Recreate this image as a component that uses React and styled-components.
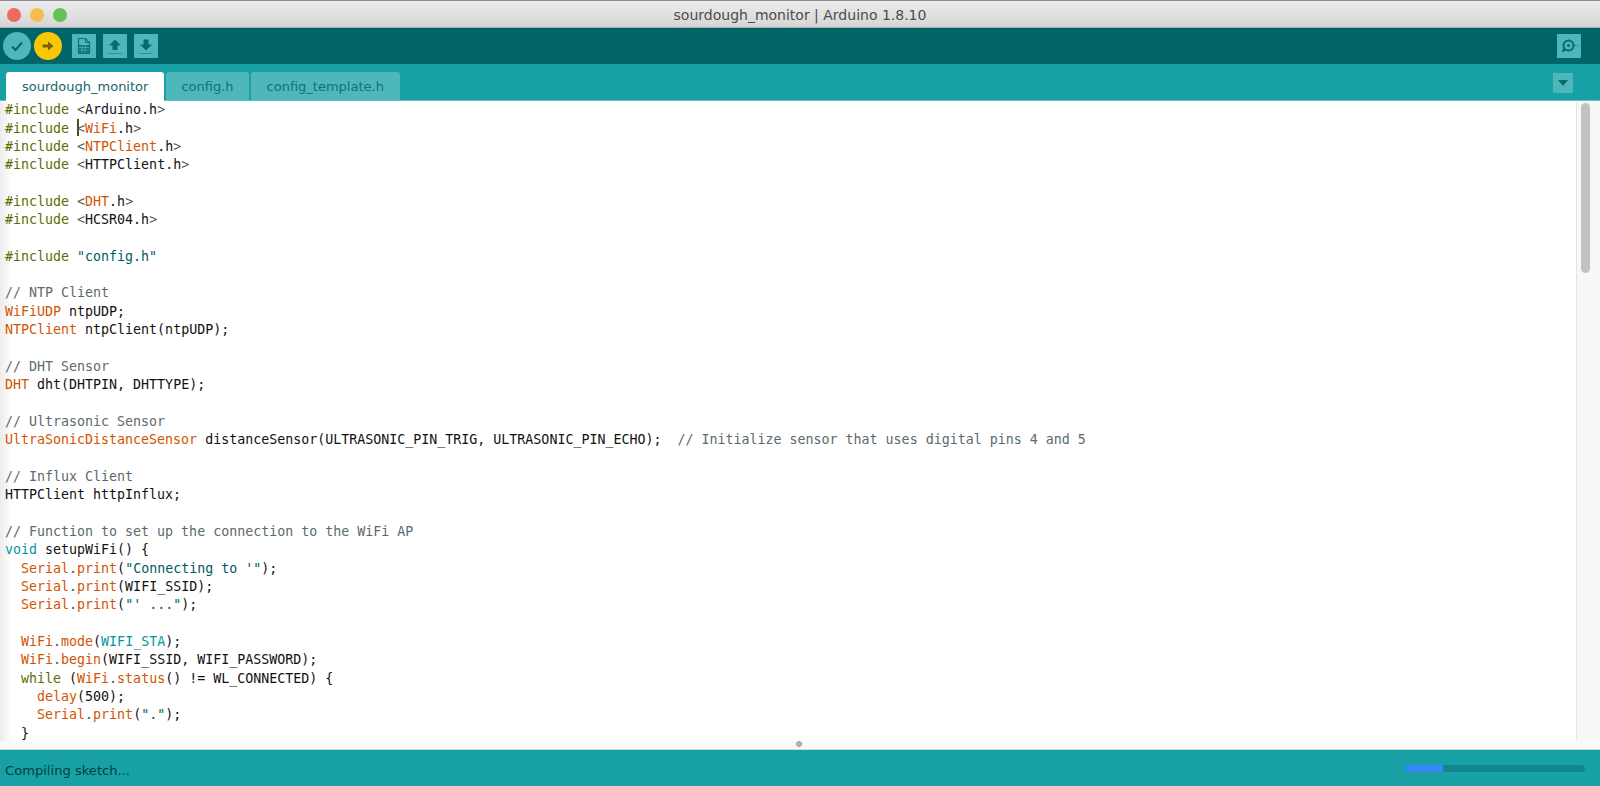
import React from "react";
import styled, { createGlobalStyle } from "styled-components";

const Global = createGlobalStyle`
  html, body { margin: 0; padding: 0; height: 100%; background: #fff; overflow: hidden; }
  #root { height: 100%; }
`;

const Frame = styled.div`
  display: flex; flex-direction: column; height: 786px; width: 1600px; overflow: hidden;
`;
const TitleBar = styled.header`
  position: relative; flex: 0 0 28px; box-sizing: border-box; display: flex; align-items: center; justify-content: center;
  background: linear-gradient(#ececec, #d6d6d6); padding-top: 2px;
  border-top: 1px solid #8a8a90; border-bottom: 1px solid #a9a9a9;
  font: 14px "DejaVu Sans", sans-serif; color: #4c4c4c;
`;
const Lights = styled.div`
  position: absolute; left: 7px; top: 7px; display: flex; gap: 9px;
`;
const Light = styled.span`
  width: 14px; height: 14px; border-radius: 50%; background: ${p => p.$c};
`;
const Toolbar = styled.div`
  flex: 0 0 36px; display: flex; align-items: center; background: #006468; padding: 0 19px 0 3px;
`;
const Round = styled.button`
  width: 28px; height: 28px; padding: 0; border: 0; border-radius: 50%; margin-right: 3px;
  background: ${p => p.$bg}; display: flex; align-items: center; justify-content: center;
`;
const Square = styled.button`
  width: 24px; height: 24px; padding: 0; border: 0; margin-right: ${p => (p.$last ? 0 : 7)}px; background: #4db7bb;
  display: flex; align-items: center; justify-content: center;
`;
const Gap = styled.div`width: ${p => p.$w}px; flex: 0 0 auto;`;
const Spacer = styled.div`flex: 1;`;
const TabBar = styled.div`
  flex: 0 0 37px; box-sizing: border-box; display: flex; align-items: flex-end; gap: 2px;
  background: #17a1a5; padding: 0 27px 0 6px; border-bottom: 1px solid #5cc3c6;
`;
const Tab = styled.div`
  box-sizing: border-box; padding: 0 ${p => p.$pad}px; border-radius: 3px 3px 0 0; display: flex; align-items: center;
  background: ${p => (p.$active ? "#fff" : "#4db7bb")}; color: ${p => (p.$active ? "#17666a" : "#0f7478")};
  font: 13px "DejaVu Sans", sans-serif; margin-bottom: ${p => (p.$active ? "-1px" : "0")};
  height: ${p => (p.$active ? "29px" : "28px")};
`;
const Dropdown = styled.div`
  width: 20px; height: 20px; background: #4db7bb; align-self: flex-start; margin-top: 9px;
  display: flex; align-items: center; justify-content: center;
`;
const EditorRow = styled.div`flex: 1; min-height: 0; display: flex; background: #fff;`;
const Code = styled.pre`
  flex: 1; margin: 0; padding: 0 0 0 5px; overflow: hidden;
  font: 13.3px/18.35px "DejaVu Sans Mono", monospace; color: #111;
  background: linear-gradient(90deg, #ececec 0, #fff 12px);
`;
const Line = styled.div`height: 18.35px; white-space: pre;`;
const COLORS = { k: "#5e6d03", o: "#d35400", s: "#005c5f", c: "#5c6a6e", t: "#00979c", g: "#555" };
const Tok = styled.span`color: ${p => COLORS[p.$k] || "#111"};`;
const Caret = styled.span`
  display: inline-block; width: 2px; height: 17px; background: #4d4d22; margin: 0 -2px -3px 0;
`;
const ScrollTrack = styled.div`
  flex: 0 0 16px; background: #f7f7f7; border-left: 1px solid #e4e4e4; padding: 2px 3px 0 4px;
`;
const Thumb = styled.div`width: 9px; height: 170px; border-radius: 5px; background: #c2c2c2;`;
const Splitter = styled.div`
  flex: 0 0 9px; background: #fafafa; position: relative;
  border-bottom: 1px solid #c8dcdc; box-sizing: border-box;
`;
const Knob = styled.span`
  width: 6px; height: 6px; border-radius: 50%; background: #b6b6b6; border: 1px solid #9c9c9c; box-sizing: border-box;
  position: absolute; top: 0; left: 796px;
`;
const Status = styled.footer`
  flex: 0 0 36px; box-sizing: border-box; display: flex; align-items: center; justify-content: space-between;
  background: #17a1a5; padding: 4px 15px 0 5px; color: #003f42; font: 13.1px "DejaVu Sans", sans-serif;
`;
const Track = styled.div`
  width: 180px; height: 7px; border-radius: 4px; background: #12878b; overflow: hidden; margin-top: -3px;
`;
const Fill = styled.div`height: 100%; width: ${p => p.$w}px; background: #3a86ff;`;

const inc = (...rest) => [["k", "#include"], ["", " "], ...rest];
const lines = [
  inc(["g", "<"], ["", "Arduino.h"], ["g", ">"]),
  [["k", "#include"], ["", " "], ["caret", ""], ["g", "<"], ["o", "WiFi"], ["", ".h"], ["g", ">"]],
  inc(["g", "<"], ["o", "NTPClient"], ["", ".h"], ["g", ">"]),
  inc(["g", "<"], ["", "HTTPClient.h"], ["g", ">"]),
  [],
  inc(["g", "<"], ["o", "DHT"], ["", ".h"], ["g", ">"]),
  inc(["g", "<"], ["", "HCSR04.h"], ["g", ">"]),
  [],
  inc(["s", "\"config.h\""]),
  [],
  [["c", "// NTP Client"]],
  [["o", "WiFiUDP"], ["", " ntpUDP;"]],
  [["o", "NTPClient"], ["", " ntpClient(ntpUDP);"]],
  [],
  [["c", "// DHT Sensor"]],
  [["o", "DHT"], ["", " dht(DHTPIN, DHTTYPE);"]],
  [],
  [["c", "// Ultrasonic Sensor"]],
  [["o", "UltraSonicDistanceSensor"], ["", " distanceSensor(ULTRASONIC_PIN_TRIG, ULTRASONIC_PIN_ECHO);  "], ["c", "// Initialize sensor that uses digital pins 4 and 5"]],
  [],
  [["c", "// Influx Client"]],
  [["", "HTTPClient httpInflux;"]],
  [],
  [["c", "// Function to set up the connection to the WiFi AP"]],
  [["t", "void"], ["", " setupWiFi() {"]],
  [["", "  "], ["o", "Serial"], ["g", "."], ["o", "print"], ["", "("], ["s", "\"Connecting to '\""], ["", ");"]],
  [["", "  "], ["o", "Serial"], ["g", "."], ["o", "print"], ["", "(WIFI_SSID);"]],
  [["", "  "], ["o", "Serial"], ["g", "."], ["o", "print"], ["", "("], ["s", "\"' ...\""], ["", ");"]],
  [],
  [["", "  "], ["o", "WiFi"], ["g", "."], ["o", "mode"], ["", "("], ["t", "WIFI_STA"], ["", ");"]],
  [["", "  "], ["o", "WiFi"], ["g", "."], ["o", "begin"], ["", "(WIFI_SSID, WIFI_PASSWORD);"]],
  [["", "  "], ["k", "while"], ["", " ("], ["o", "WiFi"], ["g", "."], ["o", "status"], ["", "() != WL_CONNECTED) {"]],
  [["", "    "], ["o", "delay"], ["", "(500);"]],
  [["", "    "], ["o", "Serial"], ["g", "."], ["o", "print"], ["", "("], ["s", "\".\""], ["", ");"]],
  [["", "  }"]],
];

const Dots = ({ y }) => <path d={`M5.500 ${y}h13`} stroke="#0b6a6e" strokeWidth="1" strokeDasharray="1 1" />;

const App = () => (
  <Frame>
    <Global />
    <TitleBar>
      <Lights>
        <Light $c="#ee6a5f" />
        <Light $c="#f5bd4f" />
        <Light $c="#61c454" />
      </Lights>
      sourdough_monitor | Arduino 1.8.10
    </TitleBar>
    <Toolbar>
      <Round $bg="#4db7bb">
        <svg width="18" height="18" viewBox="0 0 18 18"><path d="M4 9.500l3.500 3.500L14 5.500" fill="none" stroke="#0c5f65" strokeWidth="2" /></svg>
      </Round>
      <Round $bg="#f9c802">
        <svg width="18" height="18" viewBox="0 0 18 18"><path d="M3.500 7.500H9V4.500L14.500 9 9 13.500v-3H3.500z" fill="#77620a" /></svg>
      </Round>
      <Gap $w={7} />
      <Square>
        <svg width="24" height="24" viewBox="0 0 24 24"><path d="M6.500 4.500h7l4 4v11h-11z" fill="#4db7bb" stroke="#0d7479" strokeWidth="1.200" /><path d="M13.500 4.500v4h4" fill="none" stroke="#0d7479" strokeWidth="1" /><path d="M7 11h10v8H7z" fill="#0d7479" /><path d="M7 13.500h10M7 16h10M10 11v8M13 11v8" stroke="#4db7bb" strokeWidth=".7" /></svg>
      </Square>
      <Square>
        <svg width="24" height="24" viewBox="0 0 24 24"><path d="M12 5.500l6 6h-3.500V16h-5v-4.500H6z" fill="#0b6a6e" /><Dots y={19.500} /></svg>
      </Square>
      <Square>
        <svg width="24" height="24" viewBox="0 0 24 24"><path d="M12 16.500l6-6h-3.500V5.500h-5v5H6z" fill="#0b6a6e" /><Dots y={19.500} /></svg>
      </Square>
      <Spacer />
      <Square $last>
        <svg width="24" height="24" viewBox="0 0 24 24"><circle cx="11.500" cy="11.500" r="5" fill="none" stroke="#0b6a6e" strokeWidth="2" /><circle cx="11.500" cy="11.500" r="1.500" fill="#0b6a6e" /><path d="M8 15l-2.500 2.500" stroke="#0b6a6e" strokeWidth="2.600" /><path d="M18 11.500h4" stroke="#0b6a6e" strokeWidth="1" strokeDasharray="1 1" /></svg>
      </Square>
    </Toolbar>
    <TabBar>
      <Tab $active $pad={16}>sourdough_monitor</Tab>
      <Tab $pad={15}>config.h</Tab>
      <Tab $pad={16}>config_template.h</Tab>
      <Spacer />
      <Dropdown>
        <svg width="12" height="8" viewBox="0 0 12 8"><path d="M1 1h10L6 7z" fill="#0b6a6e" /></svg>
      </Dropdown>
    </TabBar>
    <EditorRow>
      <Code>
        {lines.map((l, i) => (
          <Line key={i}>
            {l.map(([k, t], j) => (k === "caret" ? <Caret key={j} /> : <Tok key={j} $k={k}>{t}</Tok>))}
          </Line>
        ))}
      </Code>
      <ScrollTrack><Thumb /></ScrollTrack>
    </EditorRow>
    <Splitter><Knob /></Splitter>
    <Status>
      Compiling sketch...
      <Track><Fill $w={38} /></Track>
    </Status>
  </Frame>
);

export default App;
